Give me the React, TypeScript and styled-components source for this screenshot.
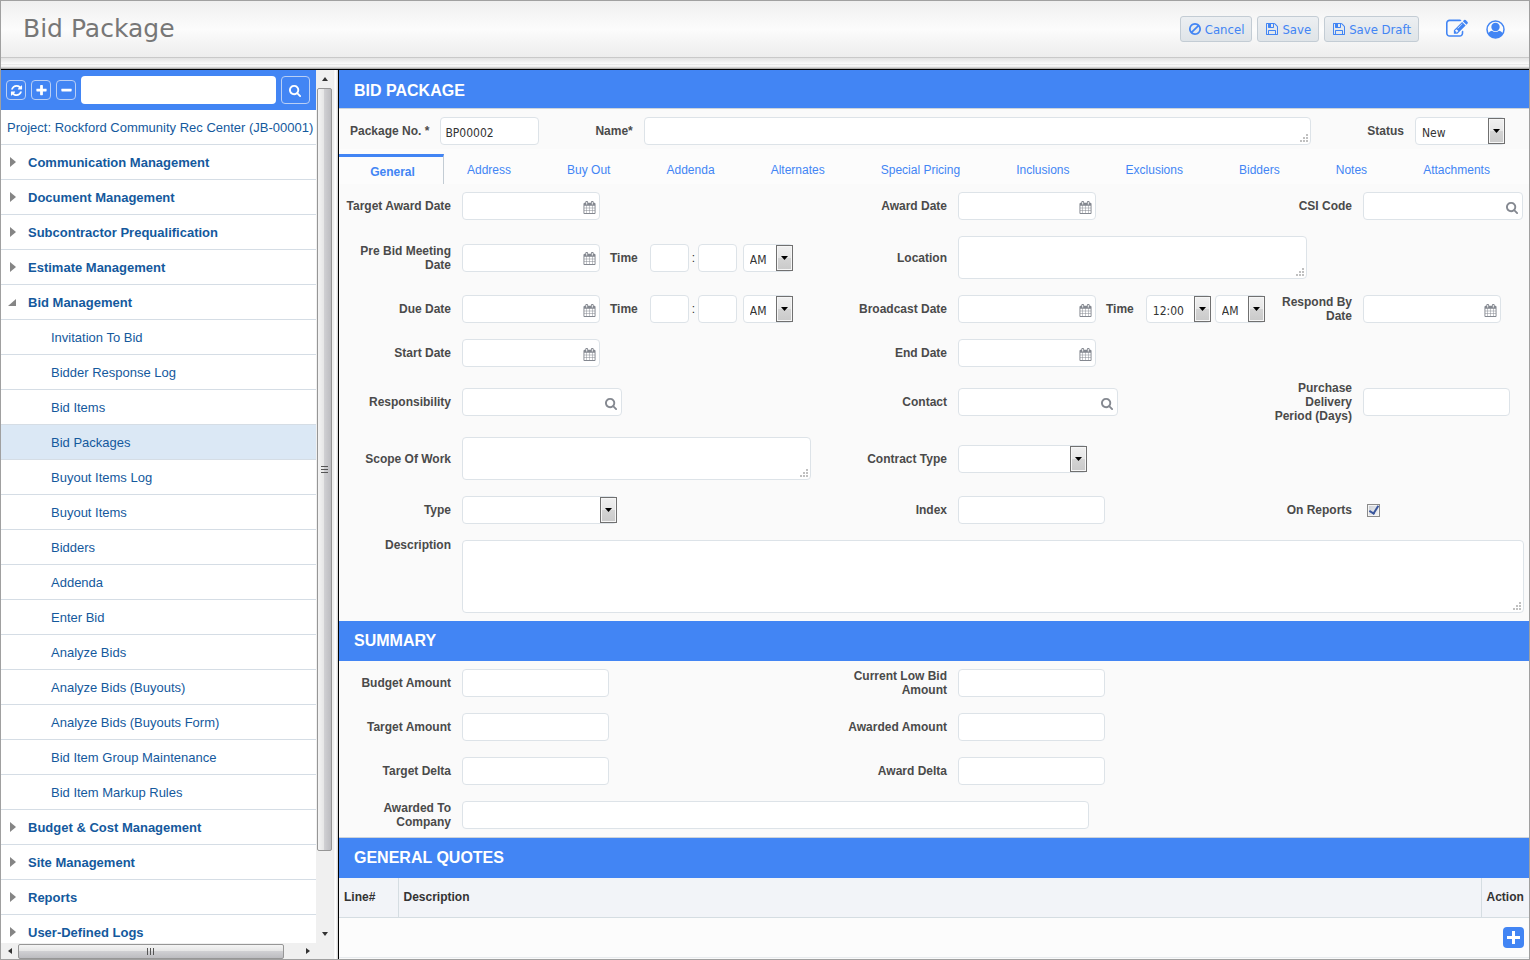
import React from "react";
import styled, { createGlobalStyle, css } from "styled-components";

const BLUE = "#4285f4";
const LINE = "#dde3e8";
const SANS = '"Liberation Sans", Arial, sans-serif';
const UI = '"DejaVu Sans Condensed", "DejaVu Sans", sans-serif';

const GlobalStyle = createGlobalStyle`
  * { box-sizing: border-box; }
  body { margin: 0; font-family: ${SANS}; font-size: 12px; color: #333; background: #fff; }
  button, input, select, textarea { font: inherit; color: inherit; margin: 0; }
`;

/* ---------- icons ---------- */

const PATHS = {
  search:
    "M1152 832q0-185-131.5-316.5t-316.5-131.5-316.5 131.5-131.5 316.5 131.5 316.5 316.5 131.5 316.5-131.5 131.5-316.5zm512 832q0 52-38 90t-90 38q-54 0-90-38l-343-342q-179 124-399 124-143 0-273.5-55.5t-225-150-150-225-55.5-273.5 55.5-273.5 150-225 225-150 273.5-55.5 273.5 55.5 225 150 150 225 55.5 273.5q0 220-124 399l343 343q37 37 37 90z",
  plus: "M1600 736v192q0 40-28 68t-68 28h-416v416q0 40-28 68t-68 28h-192q-40 0-68-28t-28-68v-416h-416q-40 0-68-28t-28-68v-192q0-40 28-68t68-28h416v-416q0-40 28-68t68-28h192q40 0 68 28t28 68v416h416q40 0 68 28t28 68z",
  minus: "M1600 736v192q0 40-28 68t-68 28h-1216q-40 0-68-28t-28-68v-192q0-40 28-68t68-28h1216q40 0 68 28t28 68z",
  refresh:
    "M1639 1056q0 5-1 7-64 268-268 434.5t-478 166.5q-146 0-282.5-55t-243.5-157l-129 129q-19 19-45 19t-45-19-19-45v-448q0-26 19-45t45-19h448q26 0 45 19t19 45-19 45l-137 137q71 66 161 102t187 36q134 0 250-65t186-179q11-17 53-117 8-23 30-23h192q13 0 22.5 9.5t9.5 22.5zm25-800v448q0 26-19 45t-45 19h-448q-26 0-45-19t-19-45 19-45l138-138q-148-137-349-137-134 0-250 65t-186 179q-11 17-53 117-8 23-30 23h-199q-13 0-22.5-9.5t-9.5-22.5v-7q65-268 270-434.5t480-166.5q146 0 284 55.5t245 156.5l130-129q19-19 45-19t45 19 19 45z",
  calendar:
    "M192 1664h288v-288h-288v288zm352 0h320v-288h-320v288zm-352-352h288v-320h-288v320zm352 0h320v-320h-320v320zm-352-384h288v-288h-288v288zm736 736h320v-288h-320v288zm-384-736h320v-288h-320v288zm768 736h288v-288h-288v288zm-384-352h320v-320h-320v320zm-352-864v-288q0-13-9.5-22.5t-22.5-9.5h-64q-13 0-22.5 9.5t-9.5 22.5v288q0 13 9.5 22.5t22.5 9.5h64q13 0 22.5-9.5t9.5-22.5zm736 864h288v-320h-288v320zm-384-384h320v-288h-320v288zm384 0h288v-288h-288v288zm32-480v-288q0-13-9.5-22.5t-22.5-9.5h-64q-13 0-22.5 9.5t-9.5 22.5v288q0 13 9.5 22.5t22.5 9.5h64q13 0 22.5-9.5t9.5-22.5zm384-64v1280q0 52-38 90t-90 38h-1408q-52 0-90-38t-38-90v-1280q0-52 38-90t90-38h128v-96q0-66 47-113t113-47h64q66 0 113 47t47 113v96h384v-96q0-66 47-113t113-47h64q66 0 113 47t47 113v96h128q52 0 90 38t38 90z",
  ban: "M1440 893q0-161-87-295l-754 753q137 89 297 89 111 0 211.5-43.5t173.5-116.5 116-174.5 43-212.5zm-999 299l755-754q-135-91-300-91-148 0-273 73t-198 199-73 274q0 162 89 299zm1223-299q0 157-61 300t-163.5 246-245 164-298.5 61-298.5-61-245-164-163.5-246-61-300 61-299.5 163.5-245.5 245-164 298.5-61 298.5 61 245 164 163.5 245.5 61 299.5z",
  save: "M512 1536h768v-384h-768v384zm896 0h128v-896q0-14-10-38.5t-20-34.5l-281-281q-10-10-34-20t-39-10v416q0 40-28 68t-68 28h-576q-40 0-68-28t-28-68v-416h-128v1280h128v-416q0-40 28-68t68-28h832q40 0 68 28t28 68v416zm-384-928v-320q0-13-9.5-22.5t-22.5-9.5h-192q-13 0-22.5 9.5t-9.5 22.5v320q0 13 9.5 22.5t22.5 9.5h192q13 0 22.5-9.5t9.5-22.5zm640 32v928q0 40-28 68t-68 28h-1344q-40 0-68-28t-28-68v-1344q0-40 28-68t68-28h928q40 0 88 20t76 48l280 280q28 28 48 76t20 88z",
  edit: "M888 1184l116-116-152-152-116 116v56h96v96h56zm440-720q-16-16-33 1l-350 350q-17 17-1 33t33-1l350-350q17-17 1-33zm80 594v190q0 119-84.5 203.5t-203.5 84.5h-832q-119 0-203.5-84.5t-84.5-203.5v-832q0-119 84.5-203.5t203.5-84.5h832q63 0 117 25 15 7 18 23 3 17-9 29l-49 49q-14 14-32 8-23-6-45-6h-832q-66 0-113 47t-47 113v832q0 66 47 113t113 47h832q66 0 113-47t47-113v-126q0-13 9-22l64-64q15-15 35-7t20 29zm-96-738l288 288-672 672h-288v-288zm444 132l-92 92-288-288 92-92q28-28 68-28t68 28l152 152q28 28 28 68t-28 68z",
};

const Icon = ({ name, size = 14 }: { name: keyof typeof PATHS; size?: number }) => (
  <svg width={size} height={size} viewBox="0 0 1792 1792" fill="currentColor" aria-hidden="true">
    <path d={PATHS[name]} />
  </svg>
);

const UserIcon = () => (
  <svg width="19" height="19" viewBox="0 0 19 19" aria-hidden="true">
    <defs>
      <clipPath id="user-clip">
        <circle cx="9.5" cy="9.5" r="8.5" />
      </clipPath>
    </defs>
    <circle cx="9.5" cy="9.5" r="8.5" fill="none" stroke={BLUE} strokeWidth="1.5" />
    <g clipPath="url(#user-clip)" fill={BLUE}>
      <circle cx="9.5" cy="7" r="4.2" />
      <path d="M2 19v-3.5c0-2.6 1.6-4.6 4-4.8 1 .8 2.200 1.200 3.500 1.200s2.500-.4 3.500-1.200c2.400.2 4 2.200 4 4.800V19z" />
    </g>
  </svg>
);

/* ---------- frame ---------- */

const Page = styled.div`
  display: flex;
  flex-direction: column;
  height: 100vh;
  border: 1px solid #a0a0a0;
`;

const TopBar = styled.header`
  flex: none;
  display: flex;
  align-items: center;
  justify-content: space-between;
  height: 57px;
  padding: 0 24px 0 22px;
  border-bottom: 1px solid #c9c9c9;
  background: linear-gradient(#efefef, #fcfcfc 50%, #ededed);
`;

const TopStrip = styled.div`
  flex: none;
  height: 12px;
  border-bottom: 1px solid #000;
  background: linear-gradient(#e2e2e2, #fafafa 50%, #e9e9e9 60%, #fff 72%, #e4e4e4 82%, #999 100%);
`;

const Title = styled.h1`
  margin: 0;
  font: 400 25px/28px "DejaVu Sans", sans-serif;
  color: #777;
`;

const Actions = styled.div`
  display: flex;
  align-items: center;
  gap: 5px;
`;

const ActionButton = styled.button`
  display: flex;
  align-items: center;
  gap: 3px;
  height: 26px;
  padding: 0 7px;
  border: 1px solid #c3ccd4;
  border-radius: 3px;
  background: linear-gradient(#eceff2, #dfe4e8);
  color: ${BLUE};
  font-family: ${UI};
  font-size: 13px;
  white-space: nowrap;
`;

const GlyphButton = styled.button`
  display: flex;
  padding: 0;
  border: 0;
  background: none;
  color: ${BLUE};
`;

const GlyphGroup = styled.div`
  display: flex;
  align-items: center;
  gap: 18px;
  margin-left: 22px;
`;

const Body = styled.div`
  flex: 1;
  min-height: 0;
  display: flex;
`;

/* ---------- sidebar ---------- */

const Sidebar = styled.nav`
  flex: none;
  width: 332px;
  display: grid;
  grid-template-columns: 315px 17px;
  grid-template-rows: minmax(0, 1fr) 16px;
  background: #f0f0f0;
`;

const TreePane = styled.div`
  overflow: hidden;
  background: #fff;
`;

const TreeTools = styled.div`
  display: flex;
  align-items: center;
  gap: 5px;
  height: 40px;
  padding: 0 6px 0 5px;
  background: ${BLUE};
`;

const ToolButton = styled.button<{ $big?: boolean }>`
  flex: none;
  display: flex;
  align-items: center;
  justify-content: center;
  width: ${(p) => (p.$big ? 29 : 20)}px;
  height: ${(p) => (p.$big ? 28 : 20)}px;
  padding: 0;
  border: 1px solid #b9cff5;
  border-radius: 4px;
  background: none;
  color: #fff;
`;

const TreeSearch = styled.input`
  flex: 1;
  min-width: 0;
  height: 28px;
  border: 0;
  border-radius: 4px;
  background: #fff;
`;

const Tree = styled.ul`
  margin: 0;
  padding: 0;
  list-style: none;
`;

const TreeRow = styled.a<{ $level: number; $active?: boolean }>`
  display: flex;
  align-items: center;
  height: 35px;
  border-bottom: 1px solid #d5dde5;
  color: #14599d;
  font-size: 13px;
  text-decoration: none;
  white-space: nowrap;
  background: ${(p) => (p.$active ? "#dbe8f5" : "#fff")};
  padding-left: ${(p) => [6, 7, 50][p.$level]}px;
  font-weight: ${(p) => (p.$level === 1 ? "bold" : "normal")};
`;

const Twisty = styled.svg`
  width: 10px;
  height: 12px;
  margin-right: 10px;
  fill: #858585;
`;

const VBar = styled.div`
  display: flex;
  flex-direction: column;
  align-items: center;
  padding: 0 1px;
`;

const HBar = styled.div`
  display: flex;
  align-items: center;
`;

const thumb = css`
  display: flex;
  align-items: center;
  justify-content: center;
  border: 1px solid #969696;
  border-radius: 2px;
`;

const VThumb = styled.div`
  ${thumb}
  width: 15px;
  flex: 764;
  background: linear-gradient(90deg, #f4f4f4, #e6e6e6 45%, #cfcfd2 50%, #bcbcc0);
`;

const HThumb = styled.div`
  ${thumb}
  height: 15px;
  flex: 1;
  background: linear-gradient(#f4f4f4, #e6e6e6 45%, #cfcfd2 50%, #bcbcc0);
`;

const VRest = styled.div`
  flex: 74;
`;

const ScrollArrow = styled.span<{ $w: number; $h: number }>`
  flex: none;
  display: flex;
  align-items: center;
  justify-content: center;
  width: ${(p) => p.$w}px;
  height: ${(p) => p.$h}px;
`;

const HEnd = styled.div`
  flex: none;
  display: flex;
  justify-content: flex-end;
  width: 32px;
`;

const Splitter = styled.div`
  flex: none;
  width: 6px;
  border-right: 1px solid #000;
  background: linear-gradient(90deg, #e6e6e6, #fff 40%, #fff 60%, #ccc);
`;

const Arrow = ({ dir }: { dir: "up" | "down" | "left" | "right" }) => {
  const d = { up: "M1 6l3-4 3 4z", down: "M1 2l3 4 3-4z", left: "M6 1L2 4l4 3z", right: "M2 1l4 3-4 3z" }[dir];
  return (
    <svg width="8" height="8" viewBox="0 0 8 8" fill="#333" aria-hidden="true">
      <path d={d} />
    </svg>
  );
};

/* ---------- form parts ---------- */

const Main = styled.main`
  flex: 1;
  min-width: 0;
  overflow: auto;
  background: #fafafa;
`;

const Heading = styled.h2<{ $first?: boolean }>`
  display: flex;
  align-items: center;
  margin: 0;
  height: ${(p) => (p.$first ? 38 : 40)}px;
  padding: ${(p) => (p.$first ? 3 : 0)}px 15px 0;
  background: ${BLUE};
  color: #fff;
  font-size: 16px;
  font-weight: bold;
`;

const Rule = styled.div`
  height: 1px;
  background: #ccd3da;
`;

const Identity = styled.div`
  display: flex;
  align-items: center;
  gap: 56px;
  height: 40px;
  padding: 4px 24px 0 11px;
`;

const Pair = styled.div<{ $grow?: boolean }>`
  display: flex;
  align-items: center;
  gap: 11px;
  ${(p) => p.$grow && "flex: 1;"}
`;

const Label = styled.label`
  color: #4a4a4a;
  font-size: 12px;
  line-height: 14px;
  font-weight: bold;
  text-align: right;
`;

const field = css`
  border: 1px solid ${LINE};
  border-radius: 4px;
  background: #fff;
  font-family: ${UI};
  font-size: 12px;
`;

const Input = styled.input<{ $w: string }>`
  ${field}
  width: ${(p) => p.$w};
  height: 28px;
  padding: 4px 4px 0;
`;

const Holder = styled.span<{ $w: string }>`
  position: relative;
  display: flex;
  width: ${(p) => p.$w};
`;

const FieldGlyph = styled.button`
  position: absolute;
  top: 2px;
  right: 4px;
  bottom: 0;
  display: flex;
  align-items: center;
  padding: 0;
  border: 0;
  background: none;
  color: #848890;
`;

const Area = styled.textarea<{ $h: number }>`
  ${field}
  display: block;
  width: 100%;
  height: ${(p) => p.$h}px;
  resize: none;
  overflow: hidden;
`;

const Grip = styled.svg`
  position: absolute;
  right: 3px;
  bottom: 3px;
  width: 8px;
  height: 8px;
  fill: #c0c0c0;
  pointer-events: none;
`;

const Select = styled.select`
  ${field}
  appearance: none;
  width: 100%;
  height: 28px;
  padding: 4px 20px 0 6px;
`;

const SelectArrow = styled.span`
  position: absolute;
  top: 1px;
  right: 0;
  bottom: 1px;
  width: 17px;
  display: flex;
  align-items: center;
  justify-content: center;
  border: 1px solid #707070;
  box-shadow: inset 0 0 0 1px #f6f6f6;
  background: linear-gradient(#f0f0f0, #e6e6e6 50%, #d4d4d4 50%, #cacaca);
  pointer-events: none;
`;

const Check = styled.input`
  appearance: none;
  width: 13px;
  height: 13px;
  margin-left: 4px;
  border: 1px solid #8a8a8a;
  box-shadow: inset 0 0 0 1px #f4f4f4;
  background: linear-gradient(135deg, #cbcfd5, #f6f6f6);
  display: flex;
  align-items: center;
  justify-content: center;
  &:checked::after {
    content: "";
    width: 4px;
    height: 8px;
    margin-bottom: 2px;
    border: solid #3a569c;
    border-width: 0 2px 2px 0;
    transform: rotate(32deg);
  }
`;

const Tabs = styled.nav`
  display: flex;
  height: 35px;
  padding-top: 5px;
  background: #fcfcfc;
`;

const Tab = styled.a<{ $active?: boolean }>`
  display: flex;
  align-items: center;
  justify-content: center;
  color: ${BLUE};
  font-size: 12px;
  text-decoration: none;
  white-space: nowrap;
  ${(p) =>
    p.$active &&
    css`
      flex: none;
      width: 105px;
      padding: 2px 0 0 3px;
      border-top: 3px solid ${BLUE};
      border-right: 1px solid #c3ccd4;
      font-weight: bold;
    `}
`;

const TabRest = styled.div`
  flex: 1;
  display: flex;
  justify-content: space-between;
  padding: 2px 39px 0 23px;
`;

const Form = styled.form`
  display: block;
`;

const Row = styled.div<{ $top?: boolean }>`
  display: grid;
  grid-template-columns: 123px minmax(0, 385fr) 111px minmax(0, 312fr) 93px 161px;
  align-items: ${(p) => (p.$top ? "start" : "center")};
  padding-right: 5px;
`;

const LabelCell = styled.div`
  display: flex;
  justify-content: flex-end;
  padding: 6px 11px 6px 0;
`;

const Cell = styled.div<{ $span?: number }>`
  display: flex;
  align-items: center;
  padding: 8px 0;
  grid-column: span ${(p) => p.$span || 1};
`;

const TimeLabel = styled(Label)`
  margin-left: 10px;
  margin-right: 12px;
`;

const Colon = styled.span`
  width: 9px;
  text-align: center;
`;

const Spacer = styled.span<{ $w: number }>`
  width: ${(p) => p.$w}px;
`;

/* ---------- table ---------- */

const Quotes = styled.table`
  width: 100%;
  border-collapse: collapse;
  table-layout: fixed;
  color: #333;
`;

const Th = styled.th<{ $w?: number }>`
  height: 39px;
  padding: 0 5px;
  ${(p) => p.$w && `width: ${p.$w}px;`}
  border-bottom: 1px solid #d5dde2;
  background: #f2f4f8;
  font-size: 12px;
  text-align: left;
  & + & {
    border-left: 1px solid #d5dde2;
  }
`;

const Td = styled.td`
  height: 40px;
  padding: 0 5px;
  border-bottom: 1px solid #e8ebee;
  background: #fcfcfc;
`;

const AddButton = styled(GlyphButton)`
  margin-left: auto;
`;

/* ---------- helpers ---------- */

const L = ({ id, children }: { id: string; children: React.ReactNode }) => (
  <LabelCell>
    <Label htmlFor={id}>{children}</Label>
  </LabelCell>
);

const Glyphed = ({ id, w, icon }: { id: string; w: string; icon: "calendar" | "search" }) => (
  <Holder $w={w}>
    <Input id={id} $w="100%" />
    <FieldGlyph type="button" aria-label={icon}>
      <Icon name={icon} size={13} />
    </FieldGlyph>
  </Holder>
);

const Text = ({ id, w, h }: { id: string; w: string; h: number }) => (
  <Holder $w={w}>
    <Area id={id} $h={h} />
    <Grip viewBox="0 0 8 8">
      {[[6, 0], [3, 3], [6, 3], [0, 6], [3, 6], [6, 6]].map(([x, y]) => (
        <rect key={`${x}-${y}`} x={x} y={y} width="2" height="2" />
      ))}
    </Grip>
  </Holder>
);

const Drop = ({ id, w, value = "", label }: { id: string; w: string; value?: string; label?: string }) => (
  <Holder $w={w}>
    <Select id={id} aria-label={label} defaultValue={value}>
      <option value={value}>{value}</option>
    </Select>
    <SelectArrow>
      <svg width="7" height="4" viewBox="0 0 7 4" aria-hidden="true">
        <path d="M0 0h7L3.500 4z" />
      </svg>
    </SelectArrow>
  </Holder>
);

const TimeEntry = ({ id }: { id: string }) => (
  <>
    <TimeLabel htmlFor={id}>Time</TimeLabel>
    <Input id={id} $w="39px" />
    <Colon>:</Colon>
    <Input aria-label="Minutes" $w="39px" />
    <Spacer $w={6} />
    <Drop id={`${id}-half`} label="AM or PM" w="50px" value="AM" />
  </>
);

/* ---------- data ---------- */

const TREE: { text: string; level: number; open?: boolean; active?: boolean }[] = [
  { text: "Project: Rockford Community Rec Center (JB-00001)", level: 0 },
  { text: "Communication Management", level: 1 },
  { text: "Document Management", level: 1 },
  { text: "Subcontractor Prequalification", level: 1 },
  { text: "Estimate Management", level: 1 },
  { text: "Bid Management", level: 1, open: true },
  { text: "Invitation To Bid", level: 2 },
  { text: "Bidder Response Log", level: 2 },
  { text: "Bid Items", level: 2 },
  { text: "Bid Packages", level: 2, active: true },
  { text: "Buyout Items Log", level: 2 },
  { text: "Buyout Items", level: 2 },
  { text: "Bidders", level: 2 },
  { text: "Addenda", level: 2 },
  { text: "Enter Bid", level: 2 },
  { text: "Analyze Bids", level: 2 },
  { text: "Analyze Bids (Buyouts)", level: 2 },
  { text: "Analyze Bids (Buyouts Form)", level: 2 },
  { text: "Bid Item Group Maintenance", level: 2 },
  { text: "Bid Item Markup Rules", level: 2 },
  { text: "Budget & Cost Management", level: 1 },
  { text: "Site Management", level: 1 },
  { text: "Reports", level: 1 },
  { text: "User-Defined Logs", level: 1 },
];

const TABS = [
  "Address",
  "Buy Out",
  "Addenda",
  "Alternates",
  "Special Pricing",
  "Inclusions",
  "Exclusions",
  "Bidders",
  "Notes",
  "Attachments",
];

export default function App() {
  return (
    <Page>
      <GlobalStyle />
      <TopBar>
        <Title>Bid Package</Title>
        <Actions>
          <ActionButton type="button">
            <Icon name="ban" /> Cancel
          </ActionButton>
          <ActionButton type="button">
            <Icon name="save" /> Save
          </ActionButton>
          <ActionButton type="button">
            <Icon name="save" /> Save Draft
          </ActionButton>
          <GlyphGroup>
            <GlyphButton type="button" aria-label="Edit">
              <Icon name="edit" size={22} />
            </GlyphButton>
            <GlyphButton type="button" aria-label="Account">
              <UserIcon />
            </GlyphButton>
          </GlyphGroup>
        </Actions>
      </TopBar>
      <TopStrip />
      <Body>
        <Sidebar>
          <TreePane>
            <TreeTools>
              <ToolButton type="button" aria-label="Refresh">
                <Icon name="refresh" size={13} />
              </ToolButton>
              <ToolButton type="button" aria-label="Expand all">
                <Icon name="plus" size={13} />
              </ToolButton>
              <ToolButton type="button" aria-label="Collapse all">
                <Icon name="minus" size={13} />
              </ToolButton>
              <TreeSearch aria-label="Search menu" />
              <ToolButton type="button" $big aria-label="Search">
                <Icon name="search" size={13} />
              </ToolButton>
            </TreeTools>
            <Tree>
              {TREE.map((n) => (
                <li key={n.text}>
                  <TreeRow href="#" $level={n.level} $active={n.active}>
                    {n.level === 1 && (
                      <Twisty viewBox="0 0 10 12">
                        <path d={n.open ? "M8 3v7H0z" : "M2 1l6 5-6 5z"} />
                      </Twisty>
                    )}
                    {n.text}
                  </TreeRow>
                </li>
              ))}
            </Tree>
          </TreePane>
          <VBar>
            <ScrollArrow $w={15} $h={18}>
              <Arrow dir="up" />
            </ScrollArrow>
            <VThumb>
              <svg width="7" height="8" viewBox="0 0 7 8" fill="#555" aria-hidden="true">
                <path d="M0 0h7v1H0zM0 3h7v1H0zM0 6h7v1H0z" />
              </svg>
            </VThumb>
            <VRest />
            <ScrollArrow $w={15} $h={18}>
              <Arrow dir="down" />
            </ScrollArrow>
          </VBar>
          <HBar>
            <ScrollArrow $w={17} $h={15}>
              <Arrow dir="left" />
            </ScrollArrow>
            <HThumb>
              <svg width="8" height="7" viewBox="0 0 8 7" fill="#555" aria-hidden="true">
                <path d="M0 0h1v7H0zM3 0h1v7H3zM6 0h1v7H6z" />
              </svg>
            </HThumb>
            <HEnd>
              <ScrollArrow $w={17} $h={15}>
                <Arrow dir="right" />
              </ScrollArrow>
            </HEnd>
          </HBar>
        </Sidebar>
        <Splitter />
        <Main>
          <Heading $first>BID PACKAGE</Heading>
          <Rule />
          <Form>
            <Identity>
              <Pair>
                <Label htmlFor="package-no">Package No. *</Label>
                <Input id="package-no" $w="99px" defaultValue="BP00002" />
              </Pair>
              <Pair $grow>
                <Label htmlFor="name">Name*</Label>
                <Text id="name" w="100%" h={28} />
              </Pair>
              <Pair>
                <Label htmlFor="status">Status</Label>
                <Drop id="status" w="90px" value="New" />
              </Pair>
            </Identity>
            <Tabs>
              <Tab href="#" $active>
                General
              </Tab>
              <TabRest>
                {TABS.map((t) => (
                  <Tab key={t} href="#">
                    {t}
                  </Tab>
                ))}
              </TabRest>
            </Tabs>

            <Row>
              <L id="target-award">Target Award Date</L>
              <Cell><Glyphed id="target-award" w="138px" icon="calendar" /></Cell>
              <L id="award">Award Date</L>
              <Cell><Glyphed id="award" w="138px" icon="calendar" /></Cell>
              <L id="csi">CSI Code</L>
              <Cell><Glyphed id="csi" w="160px" icon="search" /></Cell>
            </Row>
            <Row>
              <L id="pre-bid">Pre Bid Meeting Date</L>
              <Cell>
                <Glyphed id="pre-bid" w="138px" icon="calendar" />
                <TimeEntry id="pre-bid-time" />
              </Cell>
              <L id="location">Location</L>
              <Cell $span={3}><Text id="location" w="349px" h={43} /></Cell>
            </Row>
            <Row>
              <L id="due">Due Date</L>
              <Cell>
                <Glyphed id="due" w="138px" icon="calendar" />
                <TimeEntry id="due-time" />
              </Cell>
              <L id="broadcast">Broadcast Date</L>
              <Cell>
                <Glyphed id="broadcast" w="138px" icon="calendar" />
                <TimeLabel htmlFor="broadcast-time">Time</TimeLabel>
                <Drop id="broadcast-time" w="65px" value="12:00" />
                <Spacer $w={4} />
                <Drop id="broadcast-half" label="AM or PM" w="50px" value="AM" />
              </Cell>
              <L id="respond">Respond By Date</L>
              <Cell><Glyphed id="respond" w="138px" icon="calendar" /></Cell>
            </Row>
            <Row>
              <L id="start">Start Date</L>
              <Cell><Glyphed id="start" w="138px" icon="calendar" /></Cell>
              <L id="end">End Date</L>
              <Cell><Glyphed id="end" w="138px" icon="calendar" /></Cell>
            </Row>
            <Row>
              <L id="responsibility">Responsibility</L>
              <Cell><Glyphed id="responsibility" w="160px" icon="search" /></Cell>
              <L id="contact">Contact</L>
              <Cell><Glyphed id="contact" w="160px" icon="search" /></Cell>
              <L id="delivery">Purchase Delivery Period (Days)</L>
              <Cell><Input id="delivery" $w="147px" /></Cell>
            </Row>
            <Row>
              <L id="scope">Scope Of Work</L>
              <Cell><Text id="scope" w="349px" h={43} /></Cell>
              <L id="contract">Contract Type</L>
              <Cell><Drop id="contract" w="129px" /></Cell>
            </Row>
            <Row>
              <L id="type">Type</L>
              <Cell><Drop id="type" w="155px" /></Cell>
              <L id="index">Index</L>
              <Cell><Input id="index" $w="147px" /></Cell>
              <L id="on-reports">On Reports</L>
              <Cell><Check id="on-reports" type="checkbox" defaultChecked /></Cell>
            </Row>
            <Row $top>
              <L id="description">Description</L>
              <Cell $span={5}><Text id="description" w="100%" h={73} /></Cell>
            </Row>

            <Heading>SUMMARY</Heading>
            <Row>
              <L id="budget">Budget Amount</L>
              <Cell><Input id="budget" $w="147px" /></Cell>
              <L id="low-bid">Current Low Bid Amount</L>
              <Cell><Input id="low-bid" $w="147px" /></Cell>
            </Row>
            <Row>
              <L id="target-amount">Target Amount</L>
              <Cell><Input id="target-amount" $w="147px" /></Cell>
              <L id="awarded-amount">Awarded Amount</L>
              <Cell><Input id="awarded-amount" $w="147px" /></Cell>
            </Row>
            <Row>
              <L id="target-delta">Target Delta</L>
              <Cell><Input id="target-delta" $w="147px" /></Cell>
              <L id="award-delta">Award Delta</L>
              <Cell><Input id="award-delta" $w="147px" /></Cell>
            </Row>
            <Row>
              <L id="company">Awarded To Company</L>
              <Cell $span={3}><Input id="company" $w="627px" /></Cell>
            </Row>
          </Form>
          <Rule />
          <Heading>GENERAL QUOTES</Heading>
          <Quotes>
            <thead>
              <tr>
                <Th $w={59}>Line#</Th>
                <Th>Description</Th>
                <Th $w={48}>Action</Th>
              </tr>
            </thead>
            <tbody>
              <tr>
                <Td colSpan={3}>
                  <AddButton type="button" aria-label="Add quote">
                    <svg width="21" height="21" viewBox="0 0 21 21" aria-hidden="true">
                      <rect width="21" height="21" rx="4" fill={BLUE} />
                      <path d="M9 4h3v5h5v3h-5v5H9v-5H4V9h5z" fill="#fff" />
                    </svg>
                  </AddButton>
                </Td>
              </tr>
            </tbody>
          </Quotes>
        </Main>
      </Body>
    </Page>
  );
}
